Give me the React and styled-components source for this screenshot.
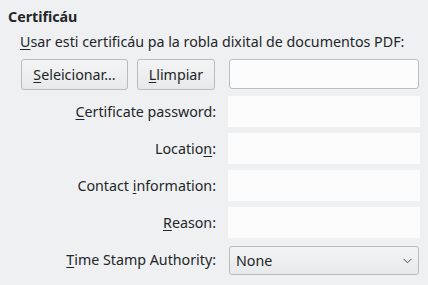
import React from 'react';
import styled, { createGlobalStyle } from 'styled-components';

const GlobalStyle = createGlobalStyle`
  html, body {
    margin: 0;
    padding: 0;
    background: #eff0f1;
  }
  body {
    font-family: "Noto Sans", "DejaVu Sans", sans-serif;
    font-size: 14.25px;
    color: #232629;
  }
`;

const Page = styled.div`
  width: 428px;
  height: 285px;
  box-sizing: border-box;
  padding: 7px 8px 0 8px;
  overflow: hidden;
`;

const Heading = styled.div`
  font-weight: bold;
  line-height: 20px;
`;

const Intro = styled.div`
  margin: 5px 0 0 12px;
  line-height: 20px;
  white-space: nowrap;
`;

const Form = styled.div`
  display: grid;
  grid-template-columns: 194px 192px;
  grid-auto-rows: 31px;
  column-gap: 13px;
  row-gap: 6px;
  margin: 7px 0 0 13px;
`;

const ButtonGroup = styled.div`
  display: flex;
  gap: 9px;
`;

const Button = styled.button`
  height: 31px;
  width: ${p => p.w}px;
  box-sizing: border-box;
  border: 1px solid #b9bbbd;
  border-radius: 3px;
  background: linear-gradient(#f3f4f4, #e8e9ea);
  font: inherit;
  color: #232629;
  padding: 0;
`;

const Label = styled.div`
  display: flex;
  align-items: center;
  justify-content: flex-end;
  white-space: nowrap;
  margin-right: -1px;
`;

const Key = styled.span`
  text-decoration: underline;
  text-underline-offset: 2px;
  text-decoration-thickness: 1px;
`;

const Field = styled.div`
  box-sizing: border-box;
  background: #fcfcfc;
  margin-right: ${p => (p.bordered ? '1px' : '0')};
  margin-left: ${p => (p.bordered ? '1px' : '0')};
  height: ${p => (p.bordered ? '30px' : '31px')};
  border: ${p => (p.bordered ? '1px solid #bbbdbf' : 'none')};
  border-radius: ${p => (p.bordered ? '3px' : '0')};
`;

const Combo = styled.div`
  box-sizing: border-box;
  height: 29px;
  margin: 2px 1px 0 1px;
  border: 1px solid #b9bbbd;
  border-radius: 3px;
  background: linear-gradient(#f3f4f4, #e8e9ea);
  display: flex;
  align-items: center;
  justify-content: space-between;
  padding: 0 6px 0 6px;
`;

const Chevron = () => (
  <svg width="9" height="6" viewBox="0 0 9 6">
    <path d="M0.5 0.8 L4.5 4.8 L8.5 0.8" fill="none" stroke="#4d5053" strokeWidth="1" />
  </svg>
);

export default function App() {
  return (
    <>
      <GlobalStyle />
      <Page>
        <Heading>Certificáu</Heading>
        <Intro><Key>U</Key>sar esti certificáu pa la robla dixital de documentos PDF:</Intro>
        <Form>
          <ButtonGroup>
            <Button w={107}><Key>S</Key>eleicionar...</Button>
            <Button w={78}><Key>L</Key>limpiar</Button>
          </ButtonGroup>
          <Field bordered />

          <Label><span><Key>C</Key>ertificate password:</span></Label>
          <Field />

          <Label><span>Locatio<Key>n</Key>:</span></Label>
          <Field />

          <Label><span>Contact <Key>i</Key>nformation:</span></Label>
          <Field />

          <Label><span><Key>R</Key>eason:</span></Label>
          <Field />

          <Label><span><Key>T</Key>ime Stamp Authority:</span></Label>
          <Combo>
            <span>None</span>
            <Chevron />
          </Combo>
        </Form>
      </Page>
    </>
  );
}
